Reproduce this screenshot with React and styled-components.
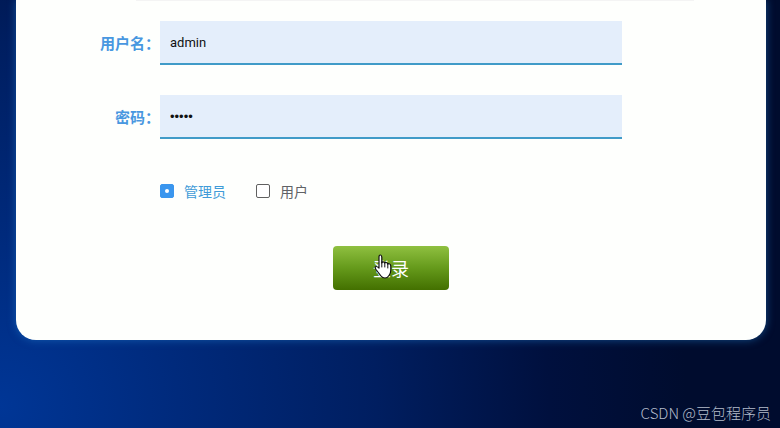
import React, { useState } from 'react';
import styled, { createGlobalStyle } from 'styled-components';

const GlobalStyle = createGlobalStyle`
	* {
		box-sizing: border-box;
	}

	body {
		margin: 0;
		font-family: 'Noto Sans CJK SC', sans-serif;
	}
`;

const Page = styled.div`
	display: flex;
	flex-direction: column;
	justify-content: space-between;
	min-height: 100vh;
	background: radial-gradient(
		ellipse 88% 155% at 0% 95%,
		#003696 0%,
		#002a7c 26%,
		#001e60 55%,
		#00103e 80%,
		#000c2e 100%
	);
`;

const Card = styled.main`
	margin: 0 14px 0 16px;
	padding-bottom: 50px;
	background: #fefffd;
	border-radius: 0 0 20px 20px;
	box-shadow: 0 0 8px rgba(30, 120, 200, 0.6);
`;

const Divider = styled.hr`
	height: 1px;
	margin: 0 72px 20px 120px;
	border: 0;
	background: #f4f4f4;
`;

const Form = styled.form`
	display: flex;
	flex-direction: column;
	gap: 30px;
`;

const Row = styled.div`
	display: grid;
	grid-template-columns: 144px 1fr;
	align-items: center;
	padding-right: 144px;
`;

const Label = styled.label`
	color: #4897e0;
	font-size: 15px;
	font-weight: 700;
	line-height: 24px;
	text-align: right;
`;

const TextInput = styled.input`
	width: 100%;
	height: 44px;
	padding: 0 10px;
	border: 0;
	border-bottom: 2px solid #409bc8;
	border-radius: 0;
	outline: 0;
	background: #e4eefb;
	color: #111;
	font-family: ${(props) => (props.type === 'password' ? "'Liberation Sans'" : 'Roboto')}, sans-serif;
	font-size: 13px;
`;

const Roles = styled.div`
	display: flex;
	gap: 30px;
	padding: 10px 0 13px 144px;
`;

const RoleLabel = styled.label`
	display: flex;
	align-items: center;
	gap: 10px;
	color: ${(props) => (props.$active ? '#409bd8' : '#606266')};
	font-size: 14px;
	line-height: 24px;
	cursor: pointer;
`;

const Radio = styled.input`
	appearance: none;
	display: grid;
	place-items: center;
	width: 14px;
	height: 14px;
	margin: 0;
	border: 1px solid #606060;
	border-radius: 2px;
	background: #fff;

	&:checked {
		border-color: #3a96ee;
		background: #3a96ee;
	}

	&:checked::after {
		content: '';
		width: 4px;
		height: 4px;
		border-radius: 50%;
		background: #fff;
	}
`;

const SubmitButton = styled.button`
	position: relative;
	align-self: center;
	width: 116px;
	height: 44px;
	padding: 0;
	border: 0;
	border-radius: 4px;
	background: linear-gradient(#8fc040, #659a1b 50%, #437000);
	color: #fff;
	font-family: inherit;
	font-size: 18px;
	font-weight: 400;
	line-height: 44px;
	cursor: pointer;
`;

const Pointer = styled.svg`
	position: absolute;
	top: 8px;
	left: 41px;
`;

const Footer = styled.footer`
	padding: 0 9px 3px;
	color: #b4bccb;
	font-size: 15px;
	font-weight: 300;
	line-height: 24px;
	text-align: right;
`;

const roles = [
	{ value: 'admin', name: '管理员' },
	{ value: 'user', name: '用户' },
];

const HandPointer = () => (
	<Pointer width="20" height="25" viewBox="0 0 20 25" aria-hidden="true">
		<path
			d="M5 14V3Q5 1 6.3 1T7.8 3V9Q8 7.8 9.2 7.8T10.8 9.2Q11 8.2 12.3 8.5T13.8 10.2Q14.2 9.3 15.4 9.8T16.8 11.8V16Q16.8 19 15 21.5Q13.5 24 11 24T7 22L2 15.5Q.6 13.5 1.6 12.7T5 14Z"
			fill="#fff"
			stroke="#111"
			strokeWidth="1.2"
			strokeLinejoin="round"
		/>
		<path d="M7.8 8V13M10.8 9V13M13.8 10V14" fill="none" stroke="#111" strokeWidth="1" strokeLinecap="round" />
	</Pointer>
);

const App = () => {
	const [username, setUsername] = useState('admin');
	const [password, setPassword] = useState('admin');
	const [role, setRole] = useState('admin');

	return (
		<>
			<GlobalStyle />
			<Page>
				<Card>
					<Divider />
					<Form onSubmit={(e) => e.preventDefault()}>
						<Row>
							<Label htmlFor="username">用户名：</Label>
							<TextInput
								id="username"
								type="text"
								value={username}
								onChange={(e) => setUsername(e.target.value)}
							/>
						</Row>
						<Row>
							<Label htmlFor="password">密码：</Label>
							<TextInput
								id="password"
								type="password"
								value={password}
								onChange={(e) => setPassword(e.target.value)}
							/>
						</Row>

						{/*  Login role */}
						<Roles role="radiogroup">
							{roles.map((item) => (
								<RoleLabel key={item.value} $active={role === item.value}>
									<Radio
										type="radio"
										name="role"
										value={item.value}
										checked={role === item.value}
										onChange={() => setRole(item.value)}
									/>
									{item.name}
								</RoleLabel>
							))}
						</Roles>

						<SubmitButton type="submit">
							登录
							<HandPointer />
						</SubmitButton>
					</Form>
				</Card>
				<Footer>CSDN @豆包程序员</Footer>
			</Page>
		</>
	);
};

export default App;
